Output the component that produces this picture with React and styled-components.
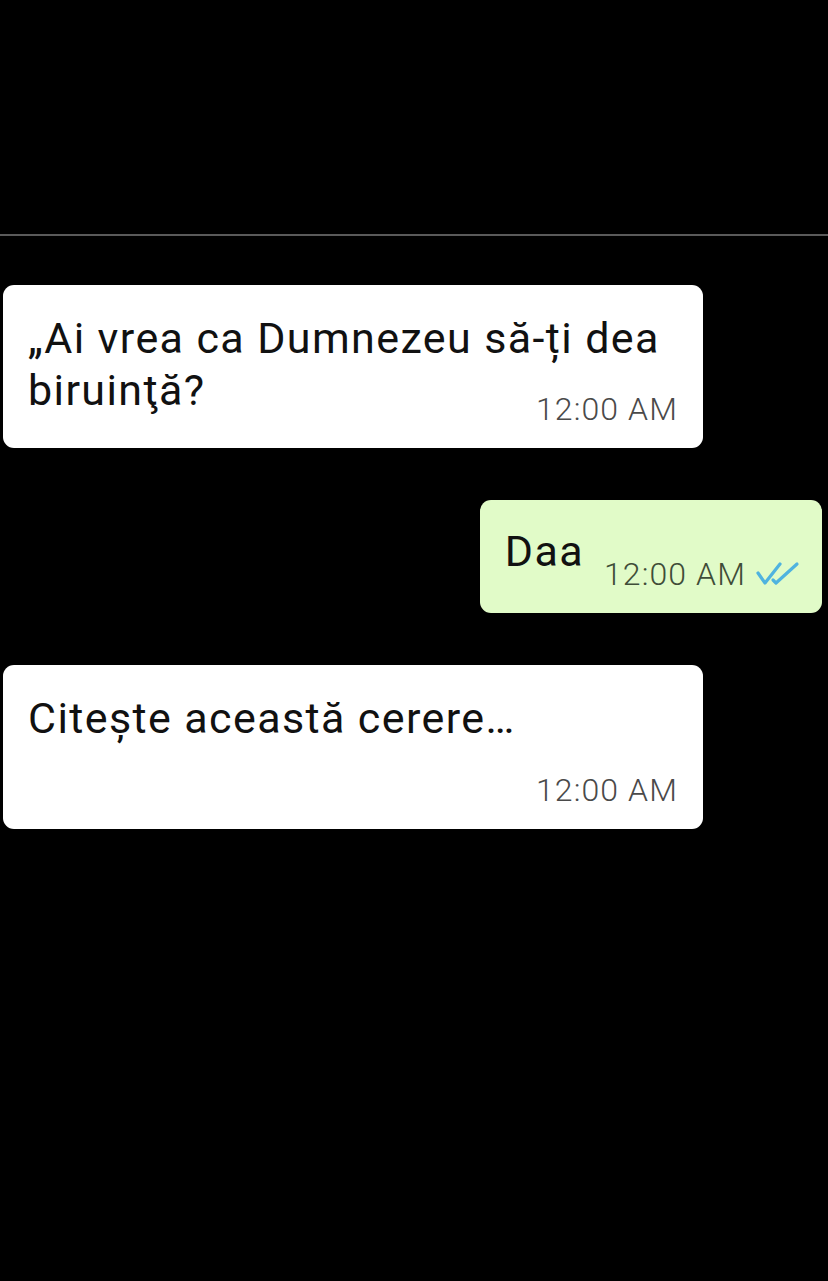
import React from 'react';
import styled, { createGlobalStyle } from 'styled-components';

const Global = createGlobalStyle`
  html, body {
    margin: 0;
    padding: 0;
    background: #000;
  }
  body {
    font-family: Roboto, "Noto Sans", sans-serif;
  }
`;

const Screen = styled.div`
  width: 828px;
  min-height: 1281px;
  background: #000;
  padding-top: 234px;
  box-sizing: border-box;
`;

const Divider = styled.div`
  height: 2px;
  background: #5a5a5a;
`;

const Thread = styled.div`
  display: flex;
  flex-direction: column;
  padding: 49px 0 0 3px;
  gap: 52px;
`;

const Bubble = styled.div`
  box-sizing: border-box;
  display: flex;
  flex-direction: ${p => (p.$out ? 'row' : 'column')};
  align-items: ${p => (p.$out ? 'flex-start' : 'stretch')};
  align-self: ${p => (p.$out ? 'flex-end' : 'flex-start')};
  width: ${p => (p.$out ? 'auto' : '700px')};
  margin-right: ${p => (p.$out ? '6px' : '0')};
  padding: ${p => (p.$out ? '25px 22px 20px 25px' : '27px 25px 20px 25px')};
  background: ${p => (p.$out ? '#e1fbc8' : '#fff')};
  border-radius: 11px;
`;

const Text = styled.div`
  font-size: 43px;
  line-height: 52px;
  color: #111;
  letter-spacing: 1.4px;
`;

const Meta = styled.div`
  display: flex;
  align-items: center;
  align-self: flex-end;
  gap: 10px;
  margin-top: ${p => (p.$out ? '30px' : `${p.$gap}px`)};
  margin-left: ${p => (p.$out ? '20px' : '0')};
  font-size: 32px;
  line-height: 38px;
  font-weight: 300;
  letter-spacing: 1.1px;
  white-space: nowrap;
  color: ${p => (p.$out ? '#3f4d38' : '#4a4a4a')};
`;

const Ticks = () => (
  <svg width="44" height="26" viewBox="0 0 44 26" fill="none">
    <path d="M2 12 L9 22 L24 3" stroke="#4fb3df" strokeWidth="3.2" strokeLinecap="round" strokeLinejoin="round" />
    <path d="M17 19 L20 22 L41 3" stroke="#4fb3df" strokeWidth="3.2" strokeLinecap="round" strokeLinejoin="round" />
  </svg>
);

const messages = [
  { id: 1, text: '„Ai vrea ca Dumnezeu să-ți dea biruinţă?', gap: -26 },
  { id: 2, text: 'Daa', out: true },
  { id: 3, text: 'Citește această cerere…', gap: 27 },
];

export default function App() {
  return (
    <>
      <Global />
      <Screen>
        <Divider />
        <Thread>
          {messages.map(m => (
            <Bubble key={m.id} $out={m.out}>
              <Text>{m.text}</Text>
              <Meta $out={m.out} $gap={m.gap}>
                12:00 AM
                {m.out && <Ticks />}
              </Meta>
            </Bubble>
          ))}
        </Thread>
      </Screen>
    </>
  );
}
